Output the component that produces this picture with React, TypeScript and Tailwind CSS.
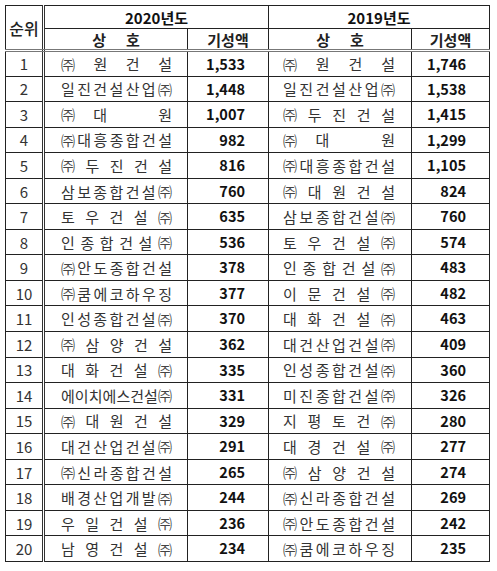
import React from "react";

type Row = { name: string[]; v: string };

const A = (s: string) => s.split(" ").map((c) => (c === "_" ? "" : c));

const y2020: Row[] = [
  { name: A("㈜ 원 건 설"), v: "1,533" },
  { name: A("일 진 건 설 산 업 ㈜"), v: "1,448" },
  { name: A("㈜ 대 _ 원"), v: "1,007" },
  { name: A("㈜ 대 흥 종 합 건 설"), v: "982" },
  { name: A("㈜ 두 진 건 설"), v: "816" },
  { name: A("삼 보 종 합 건 설 ㈜"), v: "760" },
  { name: A("토 우 건 설 ㈜"), v: "635" },
  { name: A("인 종 합 건 설 ㈜"), v: "536" },
  { name: A("㈜ 안 도 종 합 건 설"), v: "378" },
  { name: A("㈜ 쿰 에 코 하 우 징"), v: "377" },
  { name: A("인 성 종 합 건 설 ㈜"), v: "370" },
  { name: A("㈜ 삼 양 건 설"), v: "362" },
  { name: A("대 화 건 설 ㈜"), v: "335" },
  { name: A("에 이 치 에 스 건 설 ㈜"), v: "331" },
  { name: A("㈜ 대 원 건 설"), v: "329" },
  { name: A("대 건 산 업 건 설 ㈜"), v: "291" },
  { name: A("㈜ 신 라 종 합 건 설"), v: "265" },
  { name: A("배 경 산 업 개 발 ㈜"), v: "244" },
  { name: A("우 일 건 설 ㈜"), v: "236" },
  { name: A("남 영 건 설 ㈜"), v: "234" },
];

const y2019: Row[] = [
  { name: A("㈜ 원 건 설"), v: "1,746" },
  { name: A("일 진 건 설 산 업 ㈜"), v: "1,538" },
  { name: A("㈜ 두 진 건 설"), v: "1,415" },
  { name: A("㈜ 대 _ 원"), v: "1,299" },
  { name: A("㈜ 대 흥 종 합 건 설"), v: "1,105" },
  { name: A("㈜ 대 원 건 설"), v: "824" },
  { name: A("삼 보 종 합 건 설 ㈜"), v: "760" },
  { name: A("토 우 건 설 ㈜"), v: "574" },
  { name: A("인 종 합 건 설 ㈜"), v: "483" },
  { name: A("이 문 건 설 ㈜"), v: "482" },
  { name: A("대 화 건 설 ㈜"), v: "463" },
  { name: A("대 건 산 업 건 설 ㈜"), v: "409" },
  { name: A("인 성 종 합 건 설 ㈜"), v: "360" },
  { name: A("미 진 종 합 건 설 ㈜"), v: "326" },
  { name: A("지 평 토 건 ㈜"), v: "280" },
  { name: A("대 경 건 설 ㈜"), v: "277" },
  { name: A("㈜ 삼 양 건 설"), v: "274" },
  { name: A("㈜ 신 라 종 합 건 설"), v: "269" },
  { name: A("㈜ 안 도 종 합 건 설"), v: "242" },
  { name: A("㈜ 쿰 에 코 하 우 징"), v: "235" },
];

function Name({ chars }: { chars: string[] }) {
  return (
    <div className="flex justify-between items-center">
      {chars.map((c, i) => (
        <span
          key={i}
          className={c === "" ? "inline-block w-[15px]" : c === "㈜" ? "text-[14px] text-[#444]" : ""}
        >
          {c}
        </span>
      ))}
    </div>
  );
}

export default function App() {
  return (
    <div
      className="bg-white w-[497px] h-[571px] pt-[5px] pl-[5px]"
      style={{ fontFamily: '"Noto Sans CJK KR", "Noto Sans", sans-serif' }}
    >
      <table className="table-fixed border-collapse w-[484px] text-[15px] leading-none text-[#2a2a2a]">
        <colgroup>
          <col className="w-[38px]" />
          <col className="w-[144px]" />
          <col className="w-[81px]" />
          <col className="w-[143px]" />
          <col className="w-[78px]" />
        </colgroup>
        <thead>
          <tr className="h-[23px]">
            <th
              rowSpan={2}
              className="border border-[#222] border-r-[3px] border-r-[#333] border-double border-b-[3px] border-b-[#777] font-medium text-[16px] text-[#222] p-0"
            >
              순위
            </th>
            <th colSpan={2} className="border border-[#222] font-bold text-[15px] text-[#111] p-0">
              2020년도
            </th>
            <th colSpan={2} className="border border-[#222] font-bold text-[15px] text-[#111] p-0">
              2019년도
            </th>
          </tr>
          <tr className="h-[22px]">
            <th className="border border-[#222] border-b-[3px] border-b-[#777] border-double font-semibold text-[#222] p-0">
              <div className="flex justify-center gap-[20px]">
                <span>상</span>
                <span>호</span>
              </div>
            </th>
            <th className="border border-[#222] border-b-[3px] border-b-[#777] border-double font-semibold text-[#222] p-0">
              기성액
            </th>
            <th className="border border-[#222] border-b-[3px] border-b-[#777] border-double font-semibold text-[#222] p-0">
              <div className="flex justify-center gap-[20px]">
                <span>상</span>
                <span>호</span>
              </div>
            </th>
            <th className="border border-[#222] border-b-[3px] border-b-[#777] border-double font-semibold text-[#222] p-0">
              기성액
            </th>
          </tr>
        </thead>
        <tbody>
          {y2020.map((r, i) => (
            <tr key={i} className="h-[25.55px]">
              <td className="border border-[#222] border-r-[3px] border-r-[#333] border-double text-center p-0 text-[#333]">
                {i + 1}
              </td>
              <td className="border border-[#222] pl-[16px] pr-[15px] py-0 text-[#333]">
                <Name chars={r.name} />
              </td>
              <td className="border border-[#222] text-right pr-[23px] py-0 font-bold text-[14.5px] text-[#111]">
                {r.v}
              </td>
              <td className="border border-[#222] pl-[14px] pr-[16px] py-0 text-[#333]">
                <Name chars={y2019[i].name} />
              </td>
              <td className="border border-[#222] text-right pr-[23px] py-0 font-bold text-[14.5px] text-[#111]">
                {y2019[i].v}
              </td>
            </tr>
          ))}
        </tbody>
      </table>
    </div>
  );
}
